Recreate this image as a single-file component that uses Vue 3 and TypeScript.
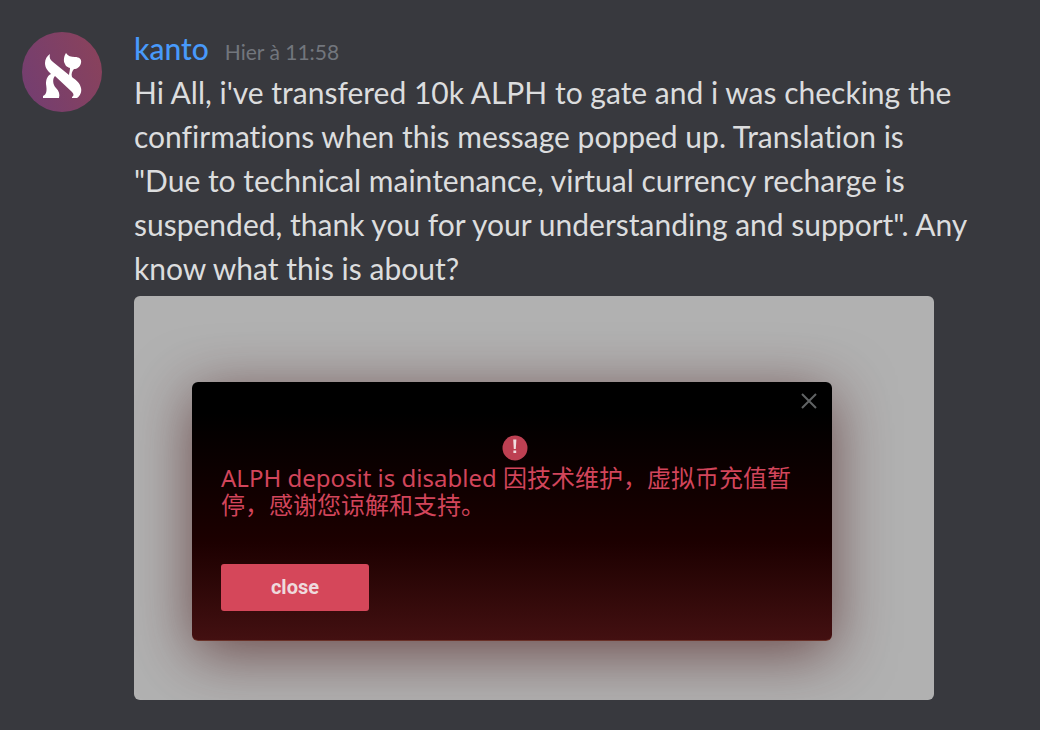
<script setup lang="ts">
const author = 'kanto'
const postedAt = 'Hier à 11:58'
const message =
  'Hi All, i\'ve transfered 10k ALPH to gate and i was checking the confirmations when this message popped up. Translation is "Due to technical maintenance, virtual currency recharge is suspended, thank you for your understanding and support". Any know what this is about?'
const notice = 'ALPH deposit is disabled 因技术维护，虚拟币充值暂停，感谢您谅解和支持。'
</script>

<template>
  <article class="message">
    <svg class="avatar" viewBox="0 0 80 80" role="img" aria-label="kanto">
      <defs>
        <linearGradient id="avatar-fill" x1="0" y1="0.7" x2="1" y2="0.3">
          <stop offset="0" stop-color="#743e70" />
          <stop offset="1" stop-color="#89425c" />
        </linearGradient>
      </defs>
      <circle cx="40" cy="40" r="40" fill="url(#avatar-fill)" />
      <path
        fill="#fff"
        d="M28 22 C25 24 23 27 23 31 C23 36 26 39 29 42 C25 44 24 48 24 52 C25 58 25 62 21 64 L21 66 L37 66 C38 62 37 59 34 56 C31 53 30 47 33 44 L50 60 C52 62 52 64 50 65 L50 66 L55 66 C58 64 60 60 59 56 C58 51 54 48 50 45 C49 42 50 39 52 37 C55 37 58 35 59 31 C60 27 57 25 53 25 C49 25 46 24 44 21 C42 24 41 29 43 32 C44 35 46 35 48 36 C48 39 47 41 47 43 L31 30 C28 28 27 25 28 22 Z"
      />
    </svg>

    <div class="body">
      <header class="head">
        <a class="author" href="#">{{ author }}</a>
        <time class="time">{{ postedAt }}</time>
      </header>
      <p class="text">{{ message }}</p>

      <div class="attachment">
        <section class="dialog" role="alertdialog" aria-labelledby="notice">
          <button class="dismiss" type="button" aria-label="Dismiss">
            <svg viewBox="0 0 16 16" width="16" height="16">
              <path d="M1 1 L15 15 M15 1 L1 15" fill="none" stroke="#606364" stroke-width="2" />
            </svg>
          </button>
          <svg class="alert" viewBox="0 0 26 26" width="26" height="26" aria-hidden="true">
            <circle cx="13" cy="13" r="12.5" fill="#bd4052" />
            <path d="M11.2 4.5 H14.4 L13.8 14 H11.8 Z M11.4 15.5 H14.2 V18 H11.4 Z" fill="#f0dfe1" />
          </svg>
          <p id="notice" class="notice">{{ notice }}</p>
          <button class="close" type="button">close</button>
        </section>
      </div>
    </div>
  </article>
</template>

<style>
body {
  margin: 0;
  background: #38393e;
}
</style>

<style scoped>
.message {
  display: flex;
  gap: 32px;
  padding: 30px 60px 30px 22px;
  font-family: Lato, "Noto Sans", sans-serif;
  font-variant-ligatures: none;
}

.avatar {
  flex: none;
  width: 80px;
  height: 80px;
  margin-top: 2px;
}

.body {
  flex: 1;
  min-width: 0;
}

.head {
  display: flex;
  align-items: baseline;
  gap: 16px;
  line-height: 36px;
}

.author {
  color: #489afb;
  font-size: 30px;
  font-weight: 500;
  text-decoration: none;
}

.time {
  color: #72767d;
  font-size: 21px;
}

.text {
  margin: 0 8px 6px 0;
  color: #dcddde;
  font-size: 30px;
  line-height: 44px;
}

.attachment {
  box-sizing: border-box;
  max-width: 800px;
  padding: 86px 102px 59px 58px;
  overflow: hidden;
  border-radius: 6px;
  background: #b1b1b1;
}

.dialog {
  position: relative;
  display: flex;
  flex-direction: column;
  padding: 53px 24px 29px 29px;
  border-bottom: 1px solid #6a3128;
  border-radius: 6px;
  background: linear-gradient(#000 0%, #000 12%, #150000 50%, #1c0000 62%, #431011 100%);
  box-shadow: 0 12px 60px rgba(70, 20, 20, 0.65);
}

.dismiss {
  position: absolute;
  top: 11px;
  right: 15px;
  display: flex;
  padding: 0;
  border: 0;
  background: none;
}

.alert {
  align-self: center;
  margin-bottom: 3px;
}

.notice {
  margin: 0 0 46px;
  color: #d2455b;
  font-family: "Noto Sans", "Noto Sans CJK SC", sans-serif;
  font-size: 24px;
  line-height: 27px;
}

.close {
  width: 148px;
  height: 47px;
  padding: 0 0 2px;
  border: 0;
  border-radius: 3px;
  background: #d5475a;
  color: #eedadd;
  font-family: Roboto, sans-serif;
  font-size: 20px;
  font-weight: 700;
}
</style>
